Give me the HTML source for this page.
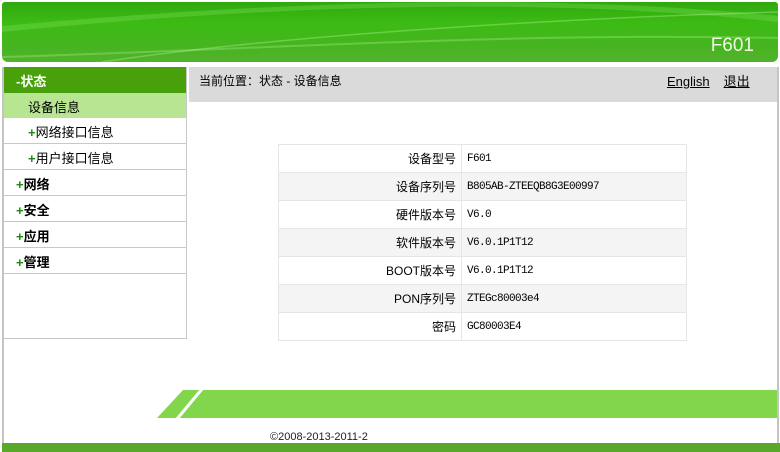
<!DOCTYPE html>
<html><head><meta charset="utf-8"><style>
*{margin:0;padding:0;box-sizing:border-box}
body{width:780px;height:452px;background:#fff;position:relative;overflow:hidden;font-family:"Liberation Sans","Noto Sans CJK SC",sans-serif;font-size:12px;color:#000}
.hdr{position:absolute;left:2px;top:2px;width:776px;height:60px;border-radius:3px 3px 6px 6px;background:linear-gradient(180deg,#2fa80e 0%,#3cbb14 35%,#45b51f 70%,#52b22c 100%);overflow:hidden}
.hdr svg{position:absolute;left:0;top:0}
.f601{position:absolute;right:24px;top:33px;color:#f2f8e6;font-size:19px}
.lb{position:absolute;left:2px;top:67px;width:2px;height:377px;background:#c4c4c4}
.rb{position:absolute;left:777px;top:67px;width:2px;height:377px;background:#c4c4c4}
.side{position:absolute;left:4px;top:67px;width:183px;height:272px;border:1px solid #c8c8c8;border-top:none;border-left:none}
.side div{height:26px;border-bottom:1px solid #c8c8c8;line-height:29px;padding-left:24px;font-size:13px}
.side .h{background:#48a00a;color:#fff;font-weight:bold;padding-left:12px;border-bottom:none}
.side .a{background:#b8e592;border-bottom:none;padding-left:24px;height:25px}
.side .t{font-weight:bold;padding-left:12px}
.p{color:#1a8a10;font-weight:bold}
.bc{position:absolute;left:189px;top:67px;width:588px;height:35px;background:#dadada;font-size:12px}
.bc .l{position:absolute;left:10px;top:5px}
.bc .r{position:absolute;left:478px;top:4px;font-size:13px}
.bc .r span{text-decoration:underline;margin-right:14px}
table{position:absolute;left:278px;top:144px;border-collapse:collapse;width:409px}
td{height:28px;border:1px solid #e6e6e6;font-size:11px;font-family:"Liberation Mono","Noto Serif CJK SC",monospace;letter-spacing:-0.6px}
td.k{width:183px;text-align:right;padding-right:5px;font-family:"Liberation Sans","Noto Sans CJK SC",sans-serif;font-size:12px;letter-spacing:0}
td.v{padding-left:5px}
tr.g td{background:#f4f4f4}
.fb{position:absolute;left:0;top:390px}
.cp{position:absolute;left:270px;top:431px;font-size:11px;color:#222}
.bot{position:absolute;left:2px;top:443px;width:778px;height:9px;background:#5aa82a}
</style></head><body>
<div class="hdr"><svg width="776" height="60"><path d="M0 30 C200 10 500 -10 776 20 L776 14 C500 -14 200 6 0 24Z" fill="#7fe05a" opacity=".35"/><path d="M0 55 C250 48 500 30 776 36" stroke="#9be87a" stroke-width="2" fill="none" opacity=".4"/><path d="M100 60 C300 30 600 15 776 10" stroke="#bff5a0" stroke-width="1.5" fill="none" opacity=".35"/></svg><div class="f601">F601</div></div>
<div class="lb"></div><div class="rb"></div>
<div class="side">
<div class="h">-状态</div>
<div class="a">设备信息</div>
<div><span class="p">+</span>网络接口信息</div>
<div><span class="p">+</span>用户接口信息</div>
<div class="t"><span class="p">+</span>网络</div>
<div class="t"><span class="p">+</span>安全</div>
<div class="t"><span class="p">+</span>应用</div>
<div class="t"><span class="p">+</span>管理</div>
</div>
<div class="bc"><span class="l">当前位置：状态 - 设备信息</span><span class="r"><span>English</span><span>退出</span></span></div>
<table>
<tr><td class="k">设备型号</td><td class="v">F601</td></tr>
<tr class="g"><td class="k">设备序列号</td><td class="v">B805AB-ZTEEQB8G3E00997</td></tr>
<tr><td class="k">硬件版本号</td><td class="v">V6.0</td></tr>
<tr class="g"><td class="k">软件版本号</td><td class="v">V6.0.1P1T12</td></tr>
<tr><td class="k">BOOT版本号</td><td class="v">V6.0.1P1T12</td></tr>
<tr class="g"><td class="k">PON序列号</td><td class="v">ZTEGc80003e4</td></tr>
<tr><td class="k">密码</td><td class="v">GC80003E4</td></tr>
</table>
<svg class="fb" width="780" height="28"><polygon points="183,0 777,0 777,28 157,28" fill="#82d64c"/><polygon points="200,-1 204,-1 179,29 175,29" fill="#fff"/></svg>
<div class="cp">©2008-2013-2011-2</div>
<div class="bot"></div>
</body></html>
